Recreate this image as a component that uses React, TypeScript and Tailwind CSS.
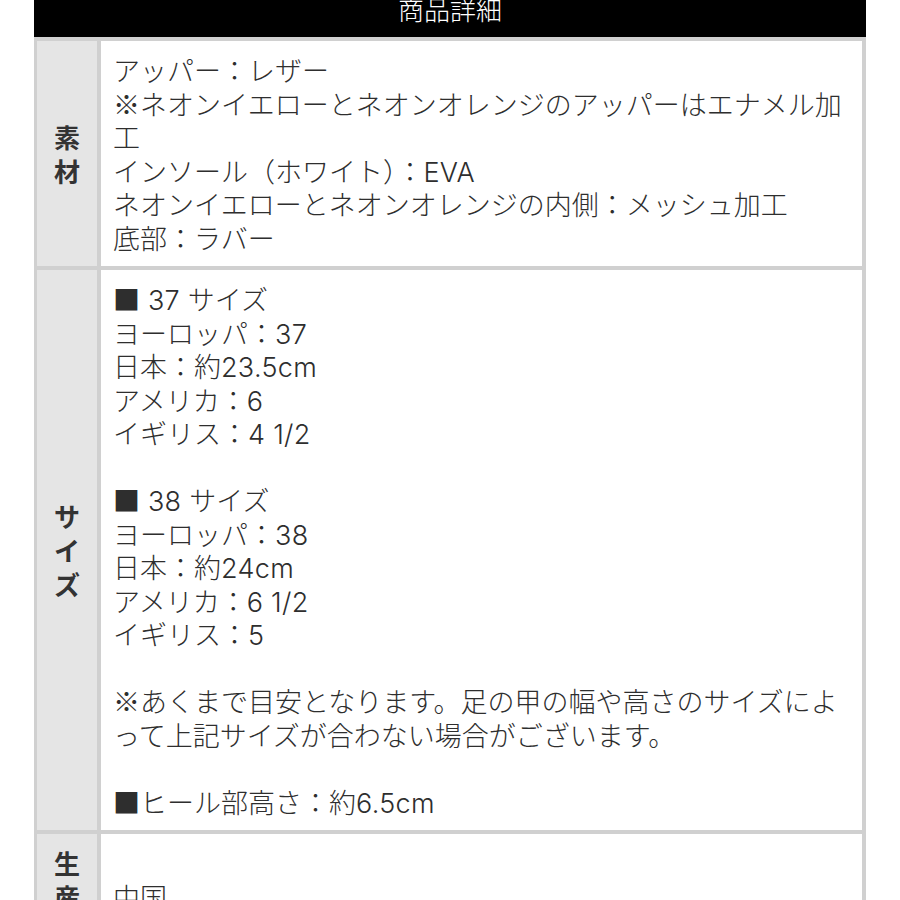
import React from 'react';

const cjk = { fontFamily: '"Noto Sans CJK JP", sans-serif' };
const latin = { fontFamily: 'Inter, "DejaVu Sans", sans-serif' };

type Line = string | null;

const material: Line[] = [
  'アッパー：レザー',
  '※ネオンイエローとネオンオレンジのアッパーはエナメル加',
  '工',
  'インソール（ホワイト）：EVA',
  'ネオンイエローとネオンオレンジの内側：メッシュ加工',
  '底部：ラバー',
];

const sizes: Line[] = [
  '■ 37 サイズ',
  'ヨーロッパ：37',
  '日本：約23.5cm',
  'アメリカ：6',
  'イギリス：4 1/2',
  null,
  '■ 38 サイズ',
  'ヨーロッパ：38',
  '日本：約24cm',
  'アメリカ：6 1/2',
  'イギリス：5',
  null,
  '※あくまで目安となります。足の甲の幅や高さのサイズによ',
  'って上記サイズが合わない場合がございます。',
  null,
  '■ヒール部高さ：約6.5cm',
];

// ASCII runs get a wider latin face, the rest stays in the JP font
function renderText(s: string) {
  return s
    .split(/([\x20-\x7e]+)/)
    .filter((p) => p.length > 0)
    .map((part, i) =>
      /^[\x20-\x7e]+$/.test(part) ? (
        <span key={i} className="font-light whitespace-pre tracking-[0.3px]" style={latin}>
          {part}
        </span>
      ) : (
        <span key={i} className="font-light" style={cjk}>
          {part}
        </span>
      )
    );
}

function Label({ chars }: { chars: string[] }) {
  return (
    <div className="bg-[#e5e5e5] flex flex-col items-center justify-center py-3" style={cjk}>
      {chars.map((c) => (
        <span key={c} className="text-[26px] leading-[34px] font-bold text-[#333]">
          {c}
        </span>
      ))}
    </div>
  );
}

function Content({ lines }: { lines: Line[] }) {
  return (
    <div className="bg-white flex flex-col justify-center px-3 py-3">
      {lines.map((l, i) =>
        l === null ? (
          <div key={i} className="h-[33.5px]" />
        ) : (
          <div key={i} className="h-[33.5px] text-[27px] leading-[33.5px] text-[#2e2e2e] whitespace-nowrap">
            {renderText(l)}
          </div>
        )
      )}
    </div>
  );
}

export default function App() {
  return (
    <div className="w-[900px] h-[900px] bg-white overflow-hidden" style={cjk}>
      <div className="ml-[34px] w-[832px]">
        <div className="h-[37px] bg-black flex justify-center overflow-hidden">
          <span className="text-[26px] leading-[26px] -mt-[4px] font-light text-white">商品詳細</span>
        </div>
        <div className="bg-[#d0d0d0] pl-[3px] pr-[4px] py-[4px] grid grid-cols-[60px_1fr] gap-[4px]">
          <Label chars={['素', '材']} />
          <Content lines={material} />
          <Label chars={['サ', 'イ', 'ズ']} />
          <Content lines={sizes} />
          <Label chars={['生', '産', '地']} />
          <Content lines={['中国']} />
        </div>
      </div>
    </div>
  );
}
